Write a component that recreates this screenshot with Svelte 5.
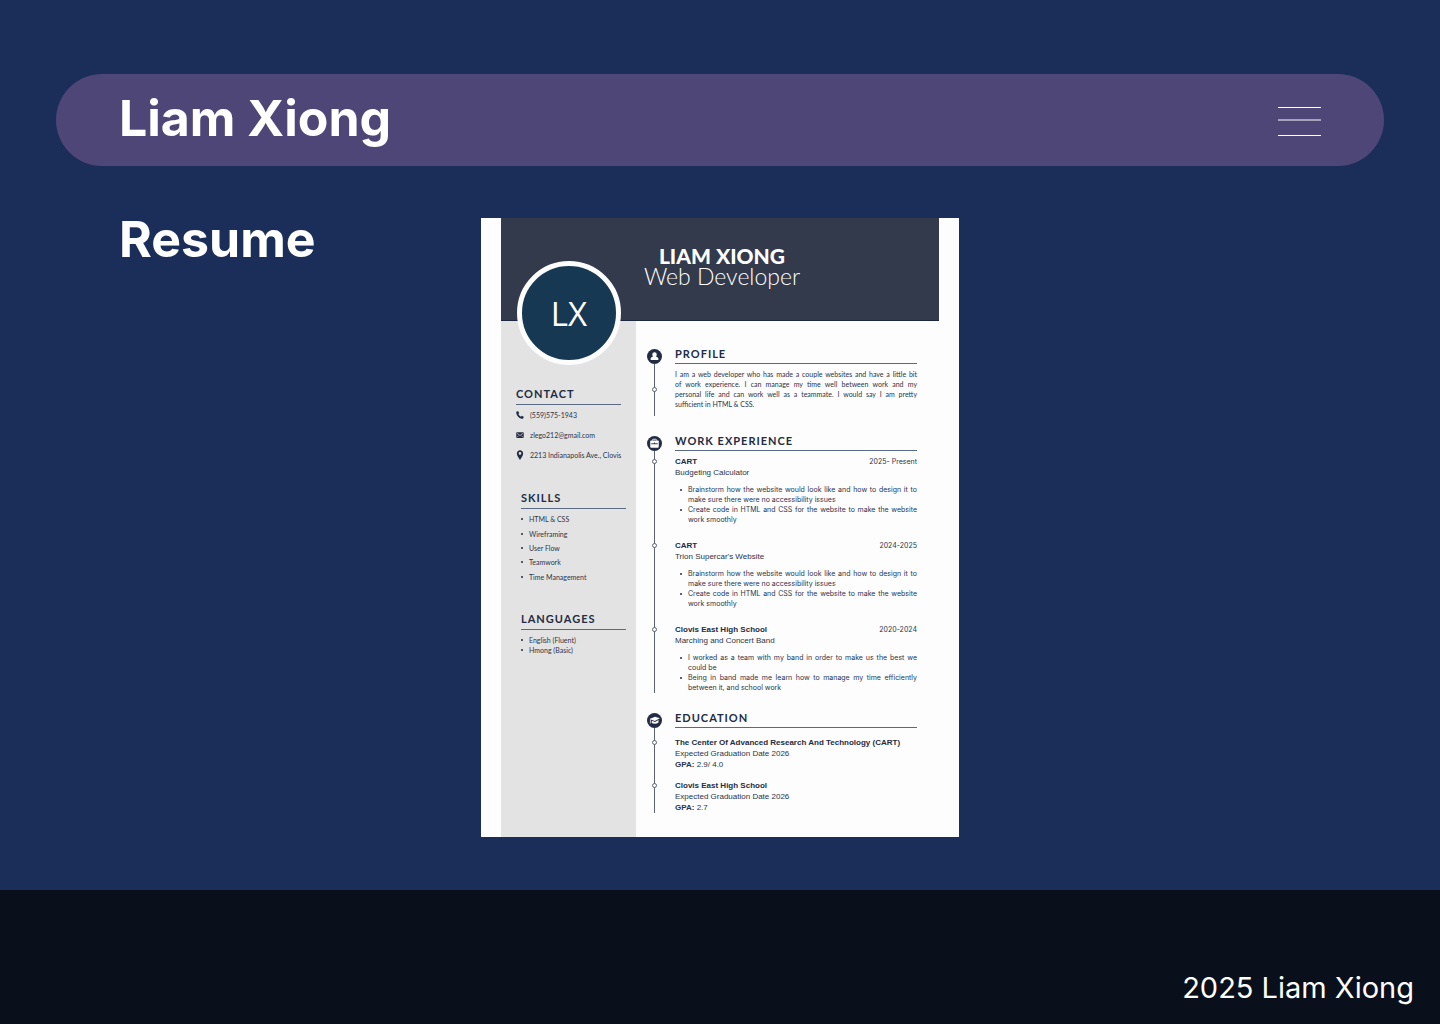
<script>
  const skills = ['HTML & CSS', 'Wireframing', 'User Flow', 'Teamwork', 'Time Management'];
  const languages = ['English (Fluent)', 'Hmong (Basic)'];

  const websitePoints = [
    'Brainstorm how the website would look like and how to design it to make\u00a0sure there were no accessibility issues',
    'Create code in HTML and CSS for the website to make the website work\u00a0smoothly'
  ];

  const jobs = [
    { place: 'CART', role: 'Budgeting Calculator', date: '2025- Present', points: websitePoints },
    { place: 'CART', role: "Trion Supercar's Website", date: '2024-2025', points: websitePoints },
    {
      place: 'Clovis East High School',
      role: 'Marching and Concert Band',
      date: '2020-2024',
      points: [
        'I worked as a team with my band in order to make us the best we could\u00a0be',
        'Being in band made me learn how to manage my time efficiently between\u00a0it, and school work'
      ]
    }
  ];

  const schools = [
    {
      name: 'The Center Of Advanced Research And Technology (CART)',
      date: 'Expected Graduation Date 2026',
      gpa: '2.9/ 4.0'
    },
    { name: 'Clovis East High School', date: 'Expected Graduation Date 2026', gpa: '2.7' }
  ];
</script>

<div class="page">
  <header class="bar">
    <span class="brand">Liam Xiong</span>
    <button class="menu" type="button" aria-label="Open menu">
      <svg viewBox="0 0 43 32" width="43" height="32" aria-hidden="true">
        <path d="M0 3.5h43M0 16h43M0 31.5h43" stroke="#fff" stroke-width="1" />
      </svg>
    </button>
  </header>

  <main class="content">
    <h1>Resume</h1>

    <article class="sheet">
      <header class="banner">
        <h2>LIAM XIONG</h2>
        <p>Web Developer</p>
      </header>

      <div class="columns">
        <aside class="side">
          <div class="avatar">LX</div>

          <section class="contact">
            <h3>CONTACT</h3>
            <ul>
              <li>
                <svg viewBox="0 0 16 16" width="8" height="8" aria-hidden="true">
                  <path d="M1.5 1.2 4.6.6l1.9 3.9-1.9 1.7c1 2.2 2.8 4 5.2 5.2l1.7-2 3.9 1.9-.7 3.3c-.2.6-.6.9-1.2.9C6.7 15.5.5 9.3.5 2.4c0-.6.4-1.1 1-1.2z" />
                </svg>
                (559)575-1943
              </li>
              <li>
                <svg viewBox="0 0 16 16" width="8" height="8" aria-hidden="true">
                  <rect x="0.5" y="2.5" width="15" height="11.5" rx="1.5" />
                  <path d="M2 4.5l6 4.5 6-4.5M2 12.5l3.5-3.5M14 12.5l-3.5-3.5" fill="none" stroke="#e3e3e3" stroke-width="1.3" />
                </svg>
                zlego212@gmail.com
              </li>
              <li>
                <svg viewBox="0 0 16 20" width="8" height="10" aria-hidden="true">
                  <path fill-rule="evenodd" d="M8 .5c3.6 0 6.3 2.7 6.3 6.3C14.3 11.5 8 19.5 8 19.5S1.7 11.5 1.7 6.8C1.7 3.2 4.4.5 8 .5zm0 3.700a2.700 2.700 0 1 0 0 5.400 2.700 2.700 0 0 0 0-5.400z" />
                </svg>
                2213 Indianapolis Ave., Clovis
              </li>
            </ul>
          </section>

          <section class="skills">
            <h3>SKILLS</h3>
            <ul class="dots">
              {#each skills as skill}
                <li>{skill}</li>
              {/each}
            </ul>
          </section>

          <section class="languages">
            <h3>LANGUAGES</h3>
            <ul class="dots">
              {#each languages as language}
                <li>{language}</li>
              {/each}
            </ul>
          </section>
        </aside>

        <div class="story">
          <section class="block profile">
            <div class="rail">
              <svg viewBox="0 0 30 30" width="15" height="15" aria-hidden="true">
                <circle cx="15" cy="15" r="15" />
                <path fill="#fdfdfd" d="M15 6.500a4.500 4.500 0 0 1 4.500 4.500c0 1.800-.9 3.300-2 4.200 3.300.6 5.500 2.600 5.500 5.300 0 .9-.5 1.500-1.500 1.500h-13c-1 0-1.500-.6-1.500-1.500 0-2.700 2.200-4.700 5.500-5.300-1.100-.9-2-2.400-2-4.200A4.500 4.500 0 0 1 15 6.500z" />
              </svg>
              <i class="line"></i>
            </div>
            <div>
              <h3>PROFILE</h3>
              <p class="marked">
                I am a web developer who has made a couple websites and have a little bit of&nbsp;work
                experience. I can manage my time well between work and my personal&nbsp;life and can work
                well as a teammate. I would say I am pretty sufficient&nbsp;in HTML &amp; CSS.
              </p>
            </div>
          </section>

          <section class="block work">
            <div class="rail">
              <svg viewBox="0 0 30 30" width="15" height="15" aria-hidden="true">
                <circle cx="15" cy="15" r="15" />
                <path d="M11 9V8q0-1.500 1.500-1.500h5q1.500 0 1.500 1.500v1" fill="none" stroke="#fdfdfd" stroke-width="1.800" />
                <path fill="#fdfdfd" d="M8 9h14q1.500 0 1.500 1.500v11q0 2-2 2h-13q-2 0-2-2v-11Q6.500 9 8 9z" />
                <path d="M8.500 15.500h13M15 13v3" fill="none" stroke="#222c44" stroke-width="1.800" />
              </svg>
              <i class="line"></i>
            </div>
            <div>
              <h3>WORK EXPERIENCE</h3>
              <div class="jobs">
                {#each jobs as job}
                  <article class="marked">
                    <div class="row">
                      <h4>{job.place}</h4>
                      <time>{job.date}</time>
                    </div>
                    <p>{job.role}</p>
                    <ul class="dots">
                      {#each job.points as point}
                        <li>{point}</li>
                      {/each}
                    </ul>
                  </article>
                {/each}
              </div>
            </div>
          </section>

          <section class="block education">
            <div class="rail">
              <svg viewBox="0 0 30 30" width="15" height="15" aria-hidden="true">
                <circle cx="15" cy="15" r="15" />
                <path fill="#fdfdfd" d="M5 12 16 7.500 26 10.500l-10.500 5.500z" />
                <path fill="#fdfdfd" d="M9.500 15.500l6.500 2.500 7-4v5Q16.500 23.500 9.500 20z" />
                <path d="M7 12.500 6.500 21" stroke="#fdfdfd" stroke-width="1.500" />
              </svg>
              <i class="line"></i>
            </div>
            <div>
              <h3>EDUCATION</h3>
              <div class="schools">
                {#each schools as school}
                  <article class="marked">
                    <h4>{school.name}</h4>
                    <p>{school.date}</p>
                    <p><b>GPA:</b> {school.gpa}</p>
                  </article>
                {/each}
              </div>
            </div>
          </section>
        </div>
      </div>
    </article>
  </main>

  <footer class="foot">2025 Liam Xiong</footer>
</div>

<style>
  :global(body) {
    background: #1b2e59;
  }

  h1, h2, h3, h4, p, ul {
    margin: 0;
    padding: 0;
  }

  ul {
    list-style: none;
  }

  .page {
    box-sizing: border-box;
    min-height: 100vh;
    display: flex;
    flex-direction: column;
    padding-top: 74px;
    font-family: Inter, sans-serif;
    color: #fff;
  }

  .bar {
    display: flex;
    align-items: center;
    justify-content: space-between;
    min-height: 92px;
    margin: 0 56px;
    padding: 0 63px;
    box-sizing: border-box;
    border-radius: 46px;
    background: #4f4678;
  }

  .brand, h1 {
    font-size: 50px;
    font-weight: 700;
    line-height: 60px;
  }

  .brand {
    padding-bottom: 4px;
  }

  .menu {
    display: block;
    padding: 0;
    border: 0;
    background: none;
    cursor: pointer;
  }

  .menu svg {
    display: block;
  }

  .content {
    flex: 1;
    display: grid;
    grid-template-columns: 1fr 478px 1fr;
    align-items: start;
    padding: 52px 0 53px;
  }

  h1 {
    padding-left: 119px;
    margin-top: -9px;
  }

  .foot {
    display: flex;
    align-items: flex-end;
    justify-content: flex-end;
    box-sizing: border-box;
    min-height: 134px;
    padding: 18px 26px;
    background: #09101c;
    font-size: 29px;
    line-height: 36px;
    font-weight: 400;
  }

  .sheet {
    padding: 0 20px;
    background: #fdfdfd;
    color: #2b344b;
    font-family: "Liberation Sans", sans-serif;
    font-size: 8px;
    line-height: 11px;
  }

  .banner {
    box-sizing: border-box;
    min-height: 103px;
    padding: 28px 0 0 4px;
    border-bottom: 1px solid #1d2740;
    background: #323a4b;
    color: #fff;
    font-family: Lato, sans-serif;
    text-align: center;
  }

  .banner h2 {
    font-size: 21px;
    line-height: 20px;
    font-weight: 900;
  }

  .banner p {
    font-size: 23px;
    line-height: 20px;
    font-weight: 300;
  }

  .columns {
    display: grid;
    grid-template-columns: 135px 1fr;
  }

  .side {
    padding-left: 15px;
    background: #e3e3e3;
    font-family: Lato, sans-serif;
    font-size: 7px;
    line-height: 10px;
  }

  .avatar {
    display: grid;
    place-items: center;
    box-sizing: border-box;
    width: 104px;
    height: 104px;
    margin: -60px 0 0 1px;
    padding-top: 2px;
    border: 5px solid #fdfdfd;
    border-radius: 50%;
    background: #163853;
    color: #fff;
    font-family: "Open Sans", sans-serif;
    font-size: 33px;
    font-weight: 400;
  }

  h3 {
    box-sizing: border-box;
    min-height: 16px;
    border-bottom: 1px solid #5a6a84;
    color: #222c44;
    font-family: Lato, sans-serif;
    font-size: 11px;
    line-height: 12px;
    font-weight: 700;
    letter-spacing: 1px;
  }

  .side h3 {
    width: 105px;
    line-height: 10px;
  }

  .contact {
    margin-top: 24px;
  }

  .contact li {
    display: flex;
    align-items: center;
    gap: 6px;
    line-height: 20px;
    white-space: nowrap;
  }

  .contact svg, .rail svg {
    display: block;
    flex: none;
    fill: #222c44;
  }

  .skills {
    margin: 28px 0 0 5px;
  }

  .skills ul {
    display: grid;
    align-items: center;
    min-height: 72px;
    margin-top: 3px;
  }

  .languages {
    margin: 30px 0 0 5px;
  }

  .languages ul {
    margin-top: 5px;
  }

  .dots li {
    position: relative;
    padding-left: 8px;
  }

  .dots li::before {
    content: "";
    position: absolute;
    left: 0;
    top: 4px;
    width: 2px;
    height: 2px;
    border-radius: 1px;
    background: #222c44;
  }

  .story {
    display: flex;
    flex-direction: column;
    gap: 19px;
    padding: 27px 22px 24px 11px;
  }

  .block {
    display: grid;
    grid-template-columns: 15px 1fr;
    column-gap: 13px;
  }

  .rail {
    display: flex;
    flex-direction: column;
    align-items: center;
    padding-top: 1px;
  }

  .line {
    flex: 1;
    width: 1px;
    background: #5a6278;
  }

  .marked {
    position: relative;
  }

  .marked::before {
    content: "";
    position: absolute;
    left: -23px;
    top: 3px;
    box-sizing: border-box;
    width: 5px;
    height: 5px;
    border: 1px solid #5a6278;
    border-radius: 50%;
    background: #fdfdfd;
  }

  .profile p {
    margin: 5px 0 7px;
    font-family: Lato, sans-serif;
    font-size: 7px;
    line-height: 10px;
    text-align: justify;
  }

  .profile .marked::before {
    top: 18px;
  }

  .jobs {
    display: grid;
    gap: 15px;
    margin-top: 5px;
  }

  .row {
    display: flex;
    justify-content: space-between;
  }

  h4 {
    color: #222c44;
    font-size: 8px;
    font-weight: 700;
  }

  time {
    font-family: Inter, sans-serif;
    font-size: 7px;
  }

  .jobs ul {
    margin: 7px 0 0 5px;
    font-family: Inter, sans-serif;
    font-size: 7px;
    line-height: 10px;
    text-align: justify;
  }

  .schools {
    display: grid;
    gap: 10px;
    margin-top: 9px;
  }
</style>
